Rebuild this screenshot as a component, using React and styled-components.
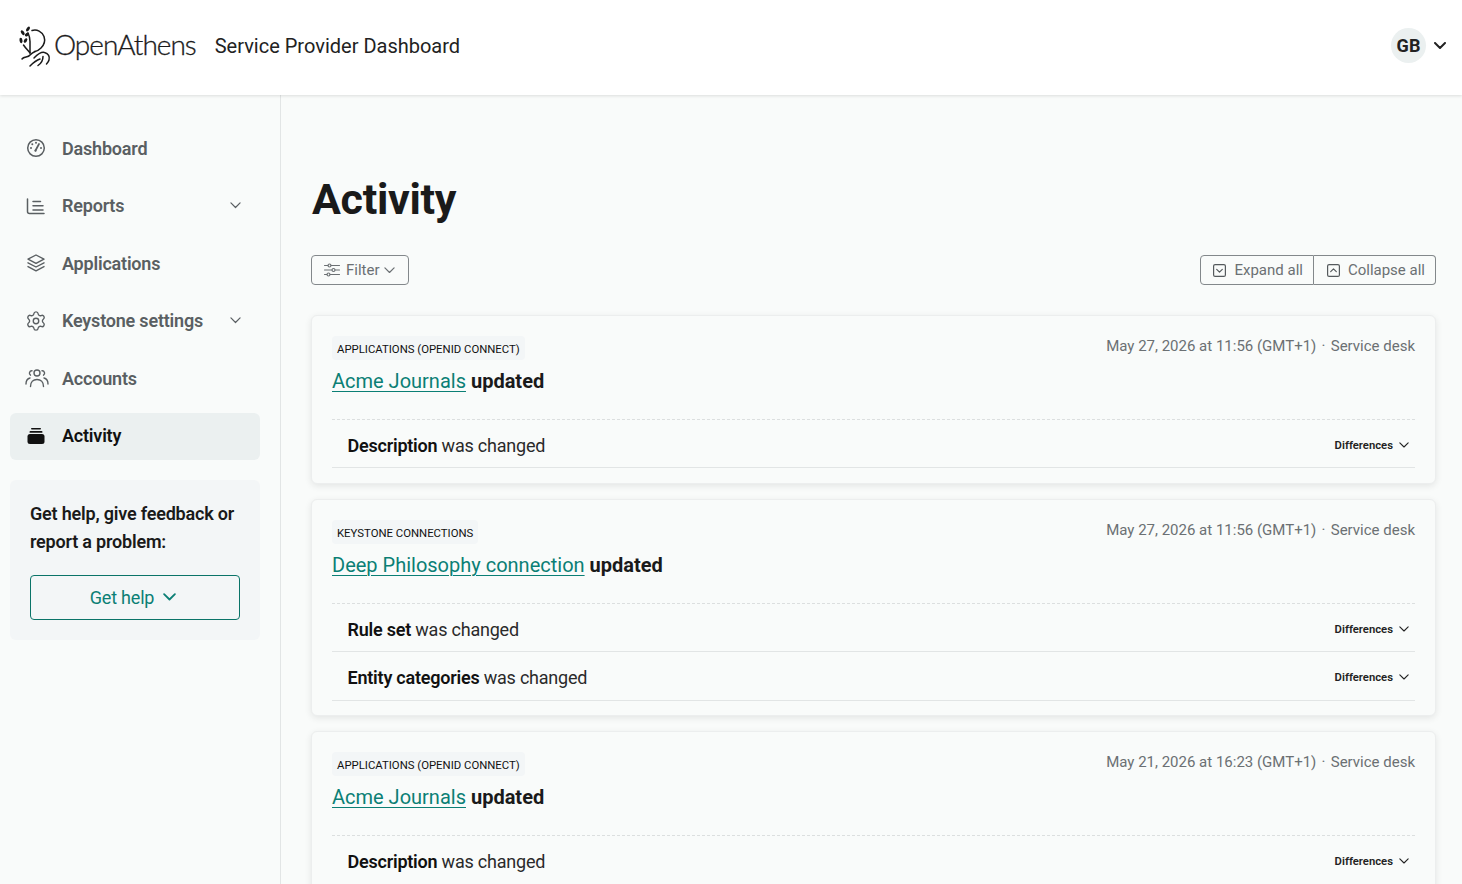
import styled, { createGlobalStyle } from "styled-components";
import { Settings } from "lucide-react";

const GlobalStyle = createGlobalStyle`
  html, body {
    margin: 0;
    padding: 0;
    background: #f9fbfa;
    font-family: Roboto, "Liberation Sans", sans-serif;
    color: #1a1a1a;
  }
  body {
    height: 884px;
    overflow: hidden;
  }
`;

const activities = [
  {
    tag: "Applications (OpenID Connect)",
    name: "Acme Journals",
    date: "May 27, 2026 at 11:56 (GMT+1)",
    changes: ["Description"],
  },
  {
    tag: "Keystone connections",
    name: "Deep Philosophy connection",
    date: "May 27, 2026 at 11:56 (GMT+1)",
    changes: ["Rule set", "Entity categories"],
  },
  {
    tag: "Applications (OpenID Connect)",
    name: "Acme Journals",
    date: "May 21, 2026 at 16:23 (GMT+1)",
    changes: ["Description"],
  },
];

const Chevron = ({ width = 11, weight = 1.2 }) => (
  <svg width={width} height={width * 0.6} viewBox="0 0 12 7.2" fill="none" stroke="currentColor" strokeWidth={(weight * 12) / width} strokeLinecap="round" strokeLinejoin="round">
    <path d="M1 1l5 5 5-5" />
  </svg>
);

const GaugeIcon = () => (
  <svg width="20" height="20" viewBox="0 0 20 20" fill="none" stroke="currentColor" strokeWidth="1.5" strokeLinecap="round">
    <circle cx="10" cy="10" r="8.300" />
    <path d="M9.500 12.500L13 6" strokeWidth="1.700" />
    <circle cx="9.500" cy="12.700" r="1.100" fill="currentColor" stroke="none" />
    <g fill="currentColor" stroke="none">
      <circle cx="5" cy="10" r="1" />
      <circle cx="6.300" cy="6.300" r="1" />
      <circle cx="10" cy="4.800" r="1" />
      <circle cx="15" cy="10" r="1" />
    </g>
  </svg>
);

const ReportsIcon = () => (
  <svg width="20" height="20" viewBox="0 0 20 20" fill="none" stroke="currentColor" strokeWidth="1.500" strokeLinecap="round">
    <path d="M1.500 3v12.500a2 2 0 0 0 2 2h14.500" />
    <path d="M7 5.500h7.500M7 9.800h10M7 14h10" />
  </svg>
);

const LayersIcon = () => (
  <svg width="20" height="20" viewBox="0 0 20 20" fill="none" stroke="currentColor" strokeWidth="1.400" strokeLinecap="round" strokeLinejoin="round">
    <path d="M10 2l8 4.200-8 4.200-8-4.200z" />
    <path d="M2 9.800l8 4.200 8-4.200" />
    <path d="M2 13.600l8 4.200 8-4.200" />
  </svg>
);

const UsersIcon = () => (
  <svg width="24" height="20" viewBox="0 0 24 20" fill="none" stroke="currentColor" strokeWidth="1.400" strokeLinecap="round">
    <circle cx="12" cy="5" r="3" />
    <path d="M5.500 18.500c0-4.500 2.800-7 6.500-7s6.500 2.500 6.500 7" />
    <path d="M7 2.800a2.400 2.400 0 0 0-1.500 4.400" />
    <path d="M17 2.800a2.400 2.400 0 0 1 1.500 4.400" />
    <path d="M1 16c0-3 1.300-5.300 4-6" />
    <path d="M23 16c0-3-1.300-5.300-4-6" />
  </svg>
);

const ActivityIcon = () => (
  <svg width="20" height="20" viewBox="0 0 20 20" fill="currentColor">
    <rect x="5" y="2" width="10" height="1.600" rx="0.800" />
    <rect x="3.500" y="5" width="13" height="1.800" rx="0.900" />
    <rect x="1.500" y="8" width="17" height="10" rx="2.500" />
  </svg>
);

const FilterIcon = () => (
  <svg width="16" height="14" viewBox="0 0 16 14" fill="none" stroke="currentColor" strokeWidth="1.100" strokeLinecap="round">
    <path d="M.5 2.500h3.500M7 2.500h8.500M.5 7h7.500M11 7h4.500M.5 11.500h2.500M6 11.500h9.500" />
    <circle cx="5.500" cy="2.500" r="1.500" />
    <circle cx="9.500" cy="7" r="1.500" />
    <circle cx="4.500" cy="11.500" r="1.500" />
  </svg>
);

const BoxChevron = ({ up }) => (
  <svg width="13" height="13" viewBox="0 0 13 13" fill="none" stroke="#555a5d" strokeWidth="1.200" strokeLinecap="round" strokeLinejoin="round">
    <rect x="0.600" y="0.600" width="11.800" height="11.800" rx="1.500" />
    <path d={up ? "M3.700 7.700l2.800-2.800 2.800 2.800" : "M3.700 5.300l2.800 2.800 2.800-2.800"} />
  </svg>
);

const LogoMark = () => (
  <svg width="32" height="42" viewBox="0 0 32 42" fill="none" stroke="#1a1a1a" strokeWidth="1.500" strokeLinecap="round" strokeLinejoin="round">
    <path d="M13 5.500C18 4 23 6.500 25 11.500c1.500 4.500 0 8.500-3 11.500-2 2-4 3-6 3.500" />
    <path d="M9 8c1.500 3 2 5.500 2 8.500v11.500" />
    <path d="M4.500 20c2 3 4.500 5.500 6.500 8" />
    <path d="M3 34c2-3 6-1 8-4 2-2 4-3 5-3.500" />
    <path d="M15 33c3-3 7-6.500 10.500-5.500 4 1 5.500 4 4.500 7.500-.5 2-1.500 3-2.500 4" />
    <path d="M11 41c3-3 7-6 10-7" />
    <path d="M19 40.500c3-2 5-5 5-9" />
    <g fill="#1a1a1a" stroke="none">
      <ellipse cx="9" cy="4" rx="1.500" ry="2.700" transform="rotate(35 9 4)" />
      <ellipse cx="3.700" cy="7.700" rx="1.500" ry="2.700" transform="rotate(-35 3.700 7.700)" />
      <ellipse cx="8" cy="9.500" rx="1.500" ry="2.500" transform="rotate(50 8 9.500)" />
      <ellipse cx="2" cy="15.500" rx="1.500" ry="2.700" transform="rotate(-10 2 15.500)" />
      <ellipse cx="6.500" cy="15.500" rx="1.500" ry="2.500" transform="rotate(30 6.500 15.500)" />
    </g>
  </svg>
);

const Page = styled.div`
  display: flex;
  flex-direction: column;
  height: 884px;
  overflow: hidden;
`;

const Header = styled.header`
  flex: none;
  box-sizing: border-box;
  display: flex;
  align-items: center;
  justify-content: space-between;
  height: 95px;
  padding: 0 16px 4px 19px;
  background: #fff;
  box-shadow: 0 1px 3px rgba(0, 0, 0, 0.12);
  position: relative;
  z-index: 1;
`;

const Brand = styled.div`
  display: flex;
  align-items: center;
`;

const LogoText = styled.span`
  margin-left: 3px;
  padding-bottom: 4px;
  font-family: Lato, sans-serif;
  font-weight: 300;
  font-size: 28px;
  letter-spacing: -1px;
  -webkit-text-stroke: 0.3px #1a1a1a;
  color: #1a1a1a;
`;

const Title = styled.span`
  margin-left: 19px;
  font-size: 20px;
  color: #222;
`;

const UserMenu = styled.div`
  display: flex;
  align-items: center;
  gap: 8px;
  color: #222;
`;

const Avatar = styled.div`
  display: flex;
  align-items: center;
  justify-content: center;
  width: 35px;
  height: 35px;
  border-radius: 50%;
  background: #ebf0f0;
  font-size: 18px;
  font-weight: 700;
  color: #222;
`;

const Body = styled.div`
  flex: 1;
  display: flex;
  min-height: 0;
`;

const Sidebar = styled.aside`
  flex: none;
  box-sizing: border-box;
  width: 281px;
  padding: 30px 20px 0 10px;
  border-right: 1px solid #e2e5e5;
`;

const NavItem = styled.div`
  box-sizing: border-box;
  display: flex;
  align-items: center;
  height: 47px;
  margin-bottom: 10.500px;
  padding: 0 19px 1px 16px;
  border-radius: 6px;
  background: ${(p) => (p.$active ? "#ebf0f0" : "transparent")};
  color: ${(p) => (p.$active ? "#111" : "#5a5f62")};
  font-size: 18px;
  font-weight: 600;
  letter-spacing: -0.200px;

  svg {
    flex: none;
  }
`;

const NavIcon = styled.span`
  display: flex;
  justify-content: flex-start;
  width: 36px;
  margin: 0 ${(p) => -(p.$shift || 0)}px 0 ${(p) => p.$shift || 0}px;
`;

const NavLabel = styled.span`
  flex: 1;
`;

const HelpBox = styled.div`
  margin-top: 20px;
  padding: 20px;
  border-radius: 6px;
  background: #f3f6f7;
`;

const HelpText = styled.div`
  font-size: 18px;
  font-weight: 600;
  line-height: 28px;
  letter-spacing: -0.200px;
  color: #1a1a1a;
`;

const HelpButton = styled.div`
  display: flex;
  align-items: center;
  justify-content: center;
  gap: 9px;
  height: 43px;
  margin-top: 19px;
  padding-right: 4px;
  border: 1px solid #0a7468;
  border-radius: 4px;
  font-size: 18px;
  letter-spacing: -0.200px;
  color: #0b7f75;
`;

const Main = styled.main`
  flex: 1;
  min-width: 0;
  padding: 0 26px 0 30px;
`;

const Heading = styled.h1`
  margin: 76px 0 0;
  padding-left: 1px;
  font-size: 43px;
  line-height: 56px;
  font-weight: 700;
  letter-spacing: -0.300px;
  color: #1a1a1a;
`;

const Toolbar = styled.div`
  display: flex;
  justify-content: space-between;
  margin-top: 28px;
`;

const OutlineButton = styled.div`
  display: flex;
  align-items: center;
  gap: ${(p) => p.$gap || 8}px;
  height: 28px;
  padding: 0 ${(p) => p.$right || 10}px 0 ${(p) => p.$left || 13}px;
  border: 1px solid #83888b;
  border-radius: 4px;
  font-size: 15px;
  color: #6b7073;
`;

const FilterLabel = styled.span`
  margin-right: -2px;
`;

const ButtonGroup = styled.div`
  display: flex;

  ${OutlineButton}:first-child {
    border-radius: 4px 0 0 4px;
  }
  ${OutlineButton}:last-child {
    border-left: 0;
    border-radius: 0 4px 4px 0;
  }
`;

const Card = styled.section`
  margin-top: ${(p) => (p.$first ? 30 : 15.2)}px;
  padding: 20px 20px 14.500px;
  border: 1px solid #eceeee;
  border-radius: 6px;
  background: #f9fbfa;
  box-shadow: 0 2px 7px rgba(0, 0, 0, 0.09);
`;

const CardTop = styled.div`
  display: flex;
  justify-content: space-between;
  align-items: flex-start;
  height: 83px;
  border-bottom: 1px dashed #dcdfdf;
`;

const Tag = styled.span`
  display: inline-block;
  padding: 0 5px;
  height: 24px;
  line-height: 27px;
  border-radius: 4px;
  background: #f3f6f7;
  font-size: 11.350px;
  font-weight: 400;
  text-transform: uppercase;
  color: #111;
`;

const CardTitle = styled.div`
  margin-top: 8px;
  font-size: 20px;
  line-height: 26px;
  font-weight: 700;
  color: #1a1a1a;
`;

const EntityLink = styled.a`
  font-weight: 400;
  color: #0b7f75;
  text-decoration: underline;
  text-underline-offset: 3px;
  text-decoration-thickness: 1px;
`;

const Meta = styled.div`
  font-size: 15px;
  line-height: 20px;
  color: #6b7073;
`;

const Dot = styled.span`
  margin: 0 1.500px;
`;

const ChangeRow = styled.div`
  box-sizing: border-box;
  display: flex;
  align-items: center;
  justify-content: space-between;
  height: 48.300px;
  padding: 4px 6px 0 15.500px;
  border-bottom: 1px solid #e2e5e5;
  font-size: 18px;
  letter-spacing: -0.220px;
  color: #2a2a2a;
`;

const ChangeName = styled.b`
  font-weight: 600;
  color: #111;
`;

const Differences = styled.span`
  display: flex;
  align-items: center;
  gap: 6px;
  margin-top: -1px;
  font-size: 11.300px;
  font-weight: 600;
  letter-spacing: 0;
  color: #222;
`;

export default function App() {
  return (
    <Page>
      <GlobalStyle />
      <Header>
        <Brand>
          <LogoMark />
          <LogoText>OpenAthens</LogoText>
          <Title>Service Provider Dashboard</Title>
        </Brand>
        <UserMenu>
          <Avatar>GB</Avatar>
          <Chevron width={12} weight={2} />
        </UserMenu>
      </Header>
      <Body>
        <Sidebar>
          <NavItem>
            <NavIcon><GaugeIcon /></NavIcon>
            <NavLabel>Dashboard</NavLabel>
          </NavItem>
          <NavItem>
            <NavIcon><ReportsIcon /></NavIcon>
            <NavLabel>Reports</NavLabel>
            <Chevron />
          </NavItem>
          <NavItem>
            <NavIcon><LayersIcon /></NavIcon>
            <NavLabel>Applications</NavLabel>
          </NavItem>
          <NavItem>
            <NavIcon $shift={-1}><Settings size={22} strokeWidth={1.5} /></NavIcon>
            <NavLabel>Keystone settings</NavLabel>
            <Chevron />
          </NavItem>
          <NavItem>
            <NavIcon $shift={-1}><UsersIcon /></NavIcon>
            <NavLabel>Accounts</NavLabel>
          </NavItem>
          <NavItem $active>
            <NavIcon><ActivityIcon /></NavIcon>
            <NavLabel>Activity</NavLabel>
          </NavItem>
          <HelpBox>
            <HelpText>Get help, give feedback or report a problem:</HelpText>
            <HelpButton>
              Get help <Chevron width={13} weight={1.8} />
            </HelpButton>
          </HelpBox>
        </Sidebar>
        <Main>
          <Heading>Activity</Heading>
          <Toolbar>
            <OutlineButton $gap={6} $left={12} $right={13}>
              <FilterIcon />
              <FilterLabel>Filter</FilterLabel>
              <Chevron />
            </OutlineButton>
            <ButtonGroup>
              <OutlineButton $left={12}>
                <BoxChevron />
                Expand all
              </OutlineButton>
              <OutlineButton>
                <BoxChevron up />
                Collapse all
              </OutlineButton>
            </ButtonGroup>
          </Toolbar>
          {activities.map((a, i) => (
            <Card key={i} $first={i === 0}>
              <CardTop>
                <div>
                  <Tag>{a.tag}</Tag>
                  <CardTitle>
                    <EntityLink>{a.name}</EntityLink> updated
                  </CardTitle>
                </div>
                <Meta>{a.date} <Dot>·</Dot> Service desk</Meta>
              </CardTop>
              {a.changes.map((c) => (
                <ChangeRow key={c}>
                  <span><ChangeName>{c}</ChangeName> was changed</span>
                  <Differences>
                    Differences <Chevron width={10} weight={1.1} />
                  </Differences>
                </ChangeRow>
              ))}
            </Card>
          ))}
        </Main>
      </Body>
    </Page>
  );
}
